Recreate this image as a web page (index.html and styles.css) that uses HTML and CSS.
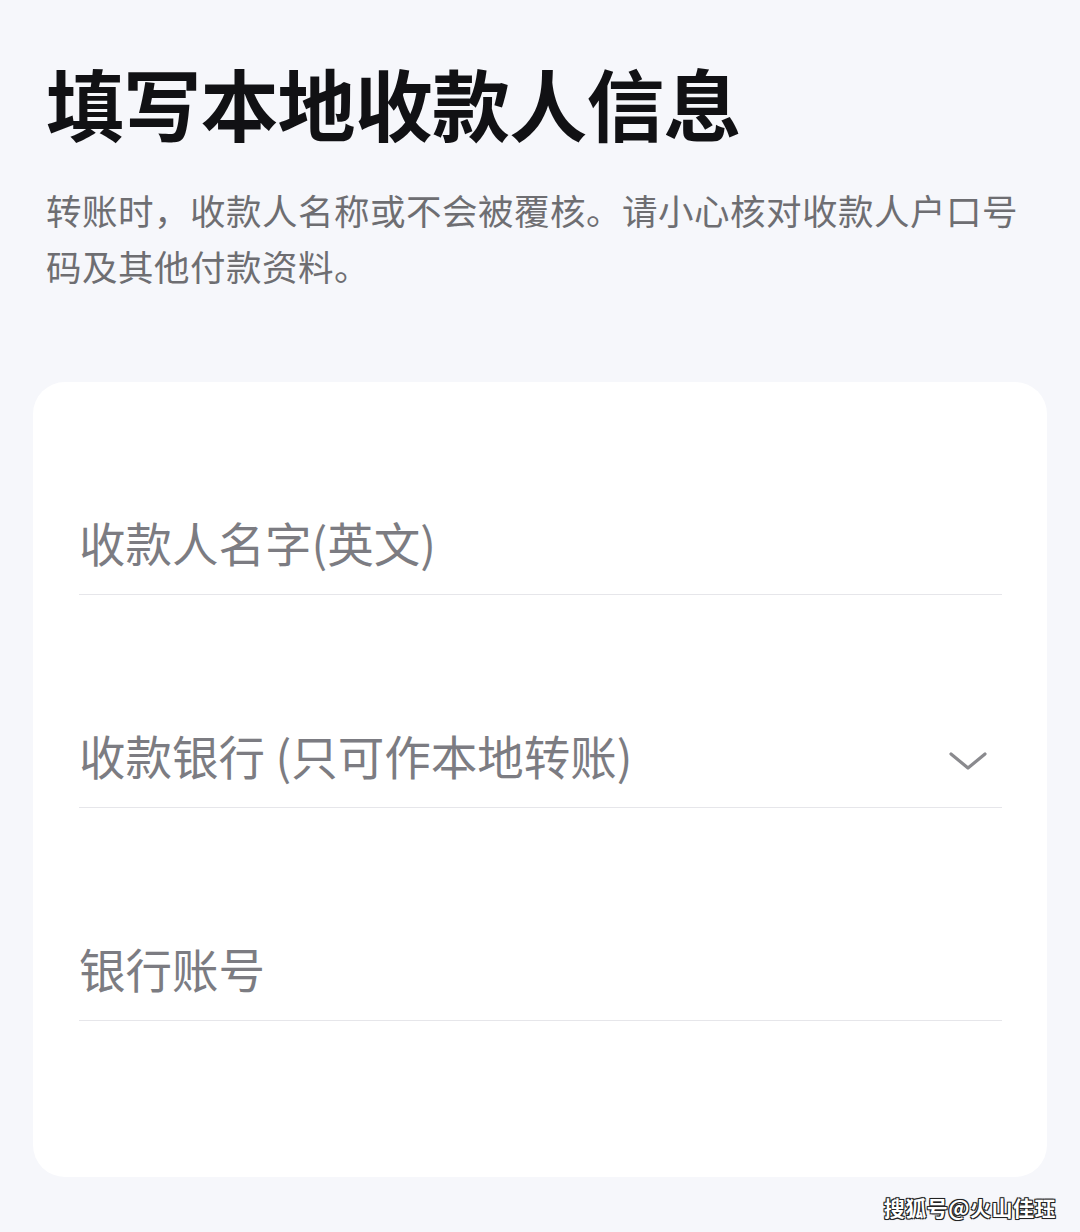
FILE: index.html
```html
<!DOCTYPE html>
<html lang="zh-CN">
<head>
<meta charset="utf-8">
<link rel="stylesheet" href="styles.css">
</head>
<body>
<div class="page">
  <header class="head">
    <h1 class="title">填写本地收款人信息</h1>
    <p class="desc">转账时，收款人名称或不会被覆核。请小心核对收款人户口号码及其他付款资料。</p>
  </header>
  <section class="card">
    <div class="field"><span class="label">收款人名字(英文)</span></div>
    <div class="field"><span class="label">收款银行 (只可作本地转账)</span>
      <svg class="chev" width="40" height="24" viewBox="0 0 40 24"><path d="M3 5 L20 19 L37 5" fill="none" stroke="#8a8a8e" stroke-width="3.2" stroke-linecap="round" stroke-linejoin="round"/></svg>
    </div>
    <div class="field"><span class="label">银行账号</span></div>
  </section>
  <div class="mark">搜狐号@火山佳珏</div>
</div>
</body>
</html>
```
FILE: styles.css
```css
* { box-sizing: border-box; }
html, body { margin: 0; padding: 0; }
body {
  width: 1080px;
  height: 1232px;
  background: #f6f7fb;
  font-family: "Noto Sans CJK SC", "Noto Sans", sans-serif;
  overflow: hidden;
}
.page { position: relative; height: 1232px; }
.head { padding: 52px 40px 0 46px; }
.title {
  margin: 0;
  font-size: 78px;
  font-weight: 700;
  line-height: 100px;
  color: #111114;
  letter-spacing: -0.8px;
}
.desc {
  margin: 30px 0 0;
  font-size: 35.5px;
  line-height: 56px;
  color: #6e6e72;
  letter-spacing: 0.5px;
}
.card {
  margin: 88px 33px 0;
  height: 795px;
  background: #ffffff;
  border-radius: 32px;
  padding: 0 45px 0 46px;
}
.field {
  height: 213px;
  display: flex;
  align-items: flex-end;
  justify-content: space-between;
  border-bottom: 1.5px solid #e6e6ea;
  padding-bottom: 22px;
}
.label {
  font-size: 46.5px;
  line-height: 60px;
  color: #7c7c82;
}
.chev { margin: 0 14px 12px 0; }
.mark {
  position: absolute;
  right: 24px;
  bottom: 10px;
  font-size: 21px;
  font-weight: 700;
  color: #ffffff;
  text-shadow: -1px -1px 0 #222, 1px -1px 0 #222, -1px 1px 0 #222, 1px 1px 0 #222, 0 0 2px #000;
  letter-spacing: 0.5px;
}
```
